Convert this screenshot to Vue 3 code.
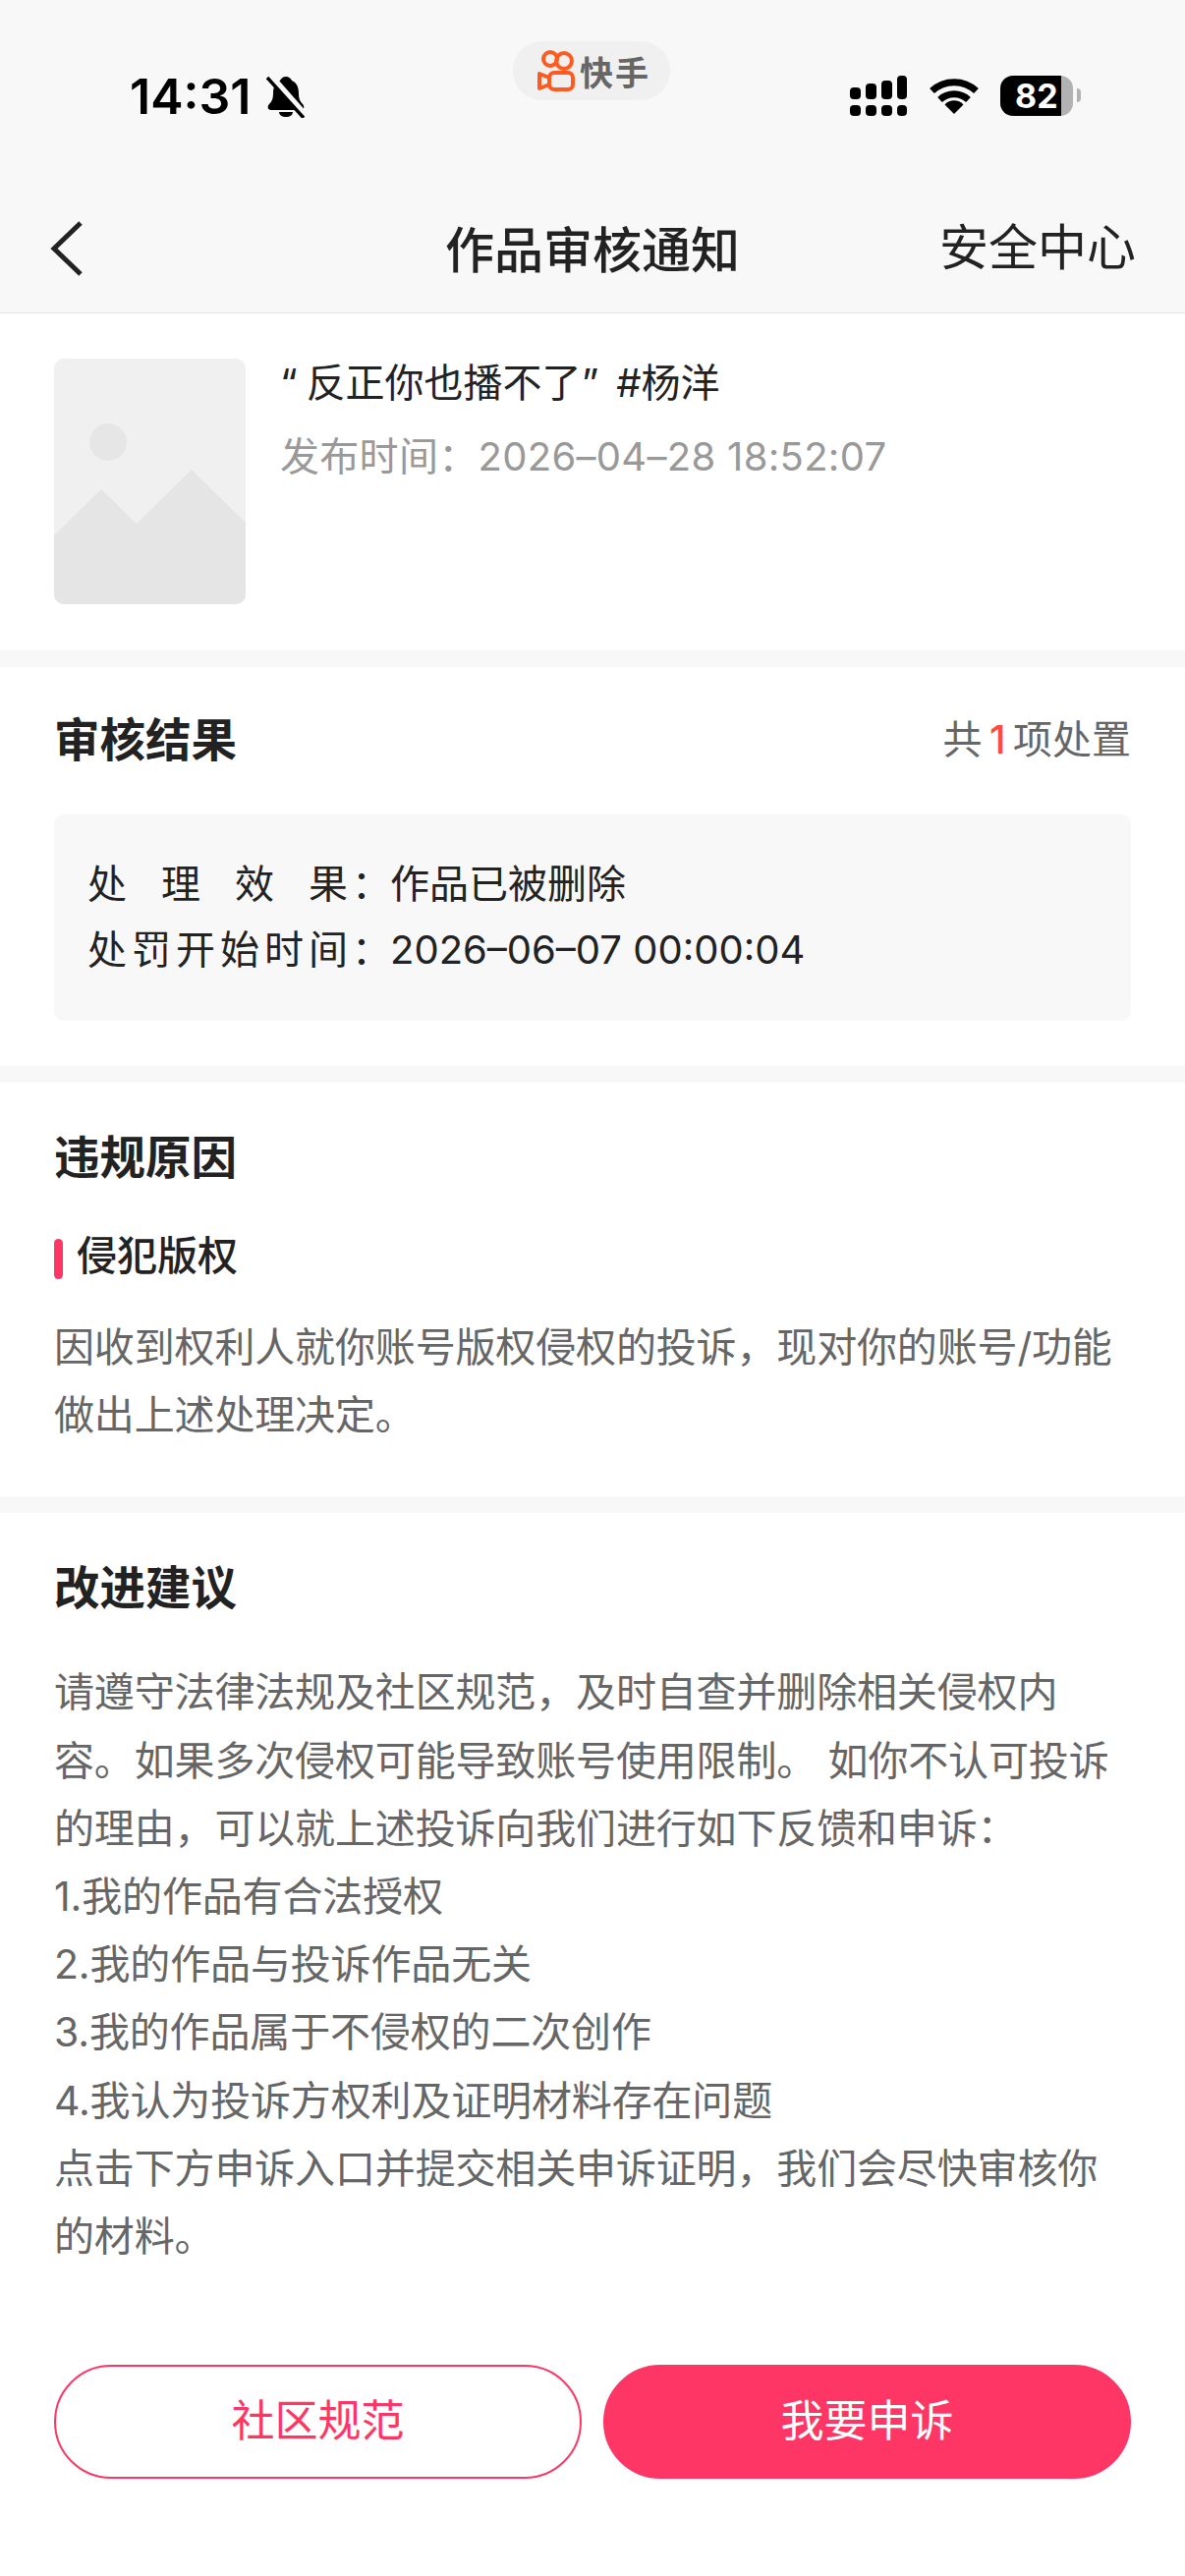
<script setup>
const results = [
  { label: '处理效果', value: '作品已被删除' },
  { label: '处罚开始时间', value: '2026–06–07 00:00:04' },
];

const reasonLines = [
  '因收到权利人就你账号版权侵权的投诉\uFF0C现对你的账号/功能',
  '做出上述处理决定。',
];

const adviceLines = [
  '请遵守法律法规及社区规范\uFF0C及时自查并删除相关侵权内',
  '容。如果多次侵权可能导致账号使用限制。 如你不认可投诉',
  '的理由\uFF0C可以就上述投诉向我们进行如下反馈和申诉\uFF1A',
  '1.我的作品有合法授权',
  '2.我的作品与投诉作品无关',
  '3.我的作品属于不侵权的二次创作',
  '4.我认为投诉方权利及证明材料存在问题',
  '点击下方申诉入口并提交相关申诉证明\uFF0C我们会尽快审核你',
  '的材料。',
];
</script>

<template>
  <div class="page">
    <header class="top">
      <div class="status">
        <div class="status-left">
          <span class="time">14:31</span>
          <svg class="bell" viewBox="0 0 40 44" width="40" height="44">
            <path d="M20 2c3 0 5 2 6 4 5 2 7 7 7 13 0 5 1 8 4 11 2 2 2 6-2 6H5c-4 0-4-4-2-6 3-3 4-6 4-11 0-6 2-11 7-13 1-2 3-4 6-4z" fill="#000" />
            <path d="M13 38h14c0 3-3 5-7 5s-7-2-7-5z" fill="#000" />
            <path d="M3 0l36 41" stroke="#f8f8f8" stroke-width="7" />
            <path d="M1 3l37 41" stroke="#000" stroke-width="3.4" />
          </svg>
        </div>
        <div class="status-right">
          <svg class="signal" viewBox="0 0 58 41" width="58" height="41">
            <rect x="0" y="12" width="11" height="12" rx="4" />
            <rect x="16" y="8" width="11" height="16" rx="4" />
            <rect x="32" y="5" width="11" height="19" rx="4" />
            <rect x="48" y="0" width="10" height="24" rx="4" />
            <rect x="0" y="30" width="11" height="11" rx="4" />
            <rect x="16" y="30" width="11" height="11" rx="4" />
            <rect x="32" y="30" width="11" height="11" rx="4" />
            <rect x="48" y="30" width="10" height="11" rx="4" />
          </svg>
          <svg class="wifi" viewBox="0 0 50 37" width="50" height="37">
            <path d="M2.5 13.5a33 33 0 0 1 45 0" fill="none" stroke="#000" stroke-width="7" />
            <path d="M10.5 22.5a21.5 21.5 0 0 1 29 0" fill="none" stroke="#000" stroke-width="7" />
            <path d="M25 37l-9.500-9.500a13 13 0 0 1 19 0z" fill="#000" />
          </svg>
          <div class="battery"><span>82</span></div>
          <i class="battery-tip"></i>
        </div>
      </div>

      <div class="app-pill">
        <svg viewBox="0 0 40 44" width="40" height="44">
          <g fill="none" stroke="#ff5a1f" stroke-width="4">
            <circle cx="14" cy="10" r="7" />
            <circle cx="28" cy="12" r="8" />
            <rect x="13" y="24" width="24" height="17" rx="5" />
            <path d="M13 29l-10-4v15l10-4z" stroke-linejoin="round" />
          </g>
        </svg>
        <span>快手</span>
      </div>

      <nav class="nav">
        <svg class="back" viewBox="0 0 40 60" width="40" height="60">
          <path d="M34 3L7 29l27 26" fill="none" stroke="#222" stroke-width="5" />
        </svg>
        <h1 class="nav-title">作品审核通知</h1>
        <span class="nav-link">安全中心</span>
      </nav>
    </header>

    <section class="work">
      <div class="thumb">
        <svg viewBox="0 0 195 250" width="195" height="250">
          <circle cx="55" cy="85" r="19" fill="#e6e6e6" />
          <path d="M0 180L48 133l36 35 56-55 55 54v83H0z" fill="#e5e5e5" />
        </svg>
      </div>
      <div class="work-info">
        <p class="work-title"><span class="quote-open">“</span>反正你也播不了<span class="quote-close">”</span>#杨洋</p>
        <p class="work-time">发布时间&#xFF1A;2026–04–28 18:52:07</p>
      </div>
    </section>

    <section class="block result">
      <div class="block-head">
        <h2>审核结果</h2>
        <span class="count">共<b>1</b>项处置</span>
      </div>
      <div class="result-card">
        <div v-for="row in results" :key="row.label" class="result-row">
          <span class="result-label">{{ row.label }}</span>
          <span class="result-colon">&#xFF1A;</span>
          <span>{{ row.value }}</span>
        </div>
      </div>
    </section>

    <section class="block reason">
      <h2>违规原因</h2>
      <h3>侵犯版权</h3>
      <p class="text">
        <span v-for="line in reasonLines" :key="line">{{ line }}</span>
      </p>
    </section>

    <section class="block advice">
      <h2>改进建议</h2>
      <p class="text">
        <span v-for="line in adviceLines" :key="line">{{ line }}</span>
      </p>
      <div class="actions">
        <button class="btn btn-line">社区规范</button>
        <button class="btn btn-fill">我要申诉</button>
      </div>
    </section>
  </div>
</template>

<style scoped>
.page {
  position: relative;
  width: 1206px;
  height: 2622px;
  overflow: hidden;
  background: #fff;
  color: #222;
  font-family: Inter, "Noto Sans CJK SC", sans-serif;
  font-size: 40px;
}

.top {
  height: 318px;
  background: #f8f8f8;
  border-bottom: 1px solid #e4e4e4;
}

.status {
  height: 190px;
  padding: 77px 106px 0 132px;
  box-sizing: border-box;
  display: flex;
  justify-content: space-between;
  align-items: flex-start;
}

.status-left {
  display: flex;
  align-items: center;
  gap: 16px;
  height: 42px;
}

.time {
  font-size: 50px;
  font-weight: 600;
  line-height: 42px;
  color: #000;
}

.status-right {
  display: flex;
  align-items: flex-start;
}

.signal {
  fill: #000;
}

.wifi {
  margin: 2px 22px 0 23px;
}

.battery {
  width: 74px;
  height: 41px;
  border-radius: 13px;
  background: linear-gradient(to right, #000 62px, #b2b2b2 62px);
  color: #fff;
  font-size: 34px;
  font-weight: 700;
  line-height: 41px;
  padding-left: 15px;
  box-sizing: border-box;
}

.battery-tip {
  width: 4px;
  height: 14px;
  margin: 13px 0 0 4px;
  background: #b2b2b2;
  border-radius: 0 7px 7px 0;
}

.app-pill {
  position: absolute;
  left: 522px;
  top: 42px;
  width: 160px;
  height: 60px;
  border-radius: 30px;
  background: #f0f0f0;
  display: flex;
  align-items: center;
  padding-left: 24px;
  box-sizing: border-box;
  gap: 4px;
  color: #666;
  font-size: 34px;
  font-weight: 700;
  letter-spacing: 2px;
}

.nav {
  height: 128px;
  position: relative;
  display: flex;
  align-items: center;
  justify-content: center;
}

.back {
  position: absolute;
  left: 48px;
  top: 34px;
}

.nav-title {
  margin: 0 0 7px;
  font-size: 50px;
  font-weight: 500;
  color: #222;
}

.nav-link {
  position: absolute;
  right: 50px;
  top: 32px;
  font-size: 50px;
  line-height: 60px;
  color: #222;
}

.work {
  display: flex;
  gap: 35px;
  padding: 46px 55px 47px;
  border-bottom: 17px solid #f8f8f8;
}

.thumb {
  width: 195px;
  height: 250px;
  border-radius: 10px;
  overflow: hidden;
  background: #f0f0f0;
  flex: none;
}

.thumb svg {
  display: block;
}

.work-info p {
  margin: 0;
  line-height: 50px;
}

.work-title {
  color: #222;
}

.quote-open {
  letter-spacing: 9px;
}

.quote-close {
  letter-spacing: 18px;
}

.work-time {
  margin-top: 25px !important;
  color: #999;
  letter-spacing: 0.300px;
}

.block {
  padding: 48px 55px;
  border-bottom: 17px solid #f8f8f8;
}

.block h2 {
  margin: 0;
  font-size: 46.5px;
  line-height: 56px;
  font-weight: 700;
  color: #222;
}

.result {
  padding-top: 46px;
  padding-bottom: 46px;
}

.block-head {
  display: flex;
  justify-content: space-between;
  align-items: center;
  height: 56px;
}

.count {
  color: #666;
  line-height: 56px;
}

.count b {
  margin: 0 7.500px;
  color: #ff4b3e;
  font-weight: 500;
}

.result-card {
  margin-top: 48px;
  padding: 37px 34px 39px;
  border-radius: 10px;
  background: #f8f8f8;
}

.result-row {
  display: flex;
  height: 67px;
  line-height: 67px;
  white-space: nowrap;
}

.result-label {
  width: 269px;
  letter-spacing: 4px;
  text-align-last: justify;
}

.result-colon {
  width: 39px;
  box-sizing: border-box;
}

.reason h3 {
  margin: 50px 0 0;
  padding-left: 23px;
  position: relative;
  font-size: 41px;
  line-height: 44px;
  font-weight: 500;
}

.reason h3::before {
  content: "";
  position: absolute;
  left: 0;
  top: 5px;
  width: 9px;
  height: 41px;
  border-radius: 5px;
  background: #fe3666;
}

.text {
  margin: 37px 0 0;
  font-size: 41px;
  line-height: 69.200px;
  letter-spacing: -0.150px;
  color: #666;
}

.text span {
  display: block;
  height: 69.200px;
  white-space: nowrap;
}

.advice {
  border-bottom: none;
}

.advice .text {
  margin-top: 44px;
}

.actions {
  margin-top: 96px;
  display: flex;
  gap: 22px;
}

.btn {
  flex: 1;
  height: 116px;
  border-radius: 58px;
  font-family: inherit;
  font-size: 44px;
  line-height: 108px;
  border: 2px solid #fe3666;
  padding: 0 0 2px;
}

.btn-line {
  background: #fff;
  color: #fe3666;
}

.btn-fill {
  background: #fe3666;
  color: #fff;
}
</style>
